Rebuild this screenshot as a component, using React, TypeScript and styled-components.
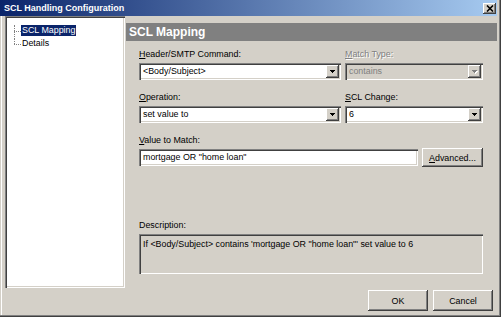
import React, { FC } from 'react';
import styled, { createGlobalStyle, css } from 'styled-components';

const colors = {
  face: '#D4D0C8',
  shadow: '#808080',
  dark: '#404040',
  light: '#FFFFFF',
  titleStart: '#0A246A',
  titleEnd: '#A6CAF0',
  selection: '#0A246A',
};

const sunken = css`
  box-shadow: inset 1px 1px ${colors.shadow}, inset 2px 2px ${colors.dark},
    inset -1px -1px ${colors.light}, inset -2px -2px ${colors.face};
`;

const raised = css`
  box-shadow: inset -1px -1px ${colors.dark}, inset 1px 1px ${colors.light},
    inset -2px -2px ${colors.shadow}, inset 2px 2px ${colors.face};
`;

const GlobalStyle = createGlobalStyle`
  html, body {
    margin: 0;
    padding: 0;
    background: #ffffff;
  }
  #root {
    width: 501px;
  }
`;

const Window = styled.div`
  width: 501px;
  height: 317px;
  box-sizing: border-box;
  display: flex;
  flex-direction: column;
  padding: 0 4px 2px 0;
  background: ${colors.face};
  box-shadow: inset -1px -1px ${colors.dark}, inset -2px -2px ${colors.shadow},
    inset 1px 0 ${colors.face}, inset 2px 0 ${colors.light};
  font-family: 'Liberation Sans', Arial, sans-serif;
  font-size: 8.9px;
  color: #000;
`;

const TitleBar = styled.div`
  height: 16px;
  flex: none;
  display: flex;
  align-items: center;
  justify-content: space-between;
  padding: 0 1px 0 4px;
  background: linear-gradient(to right, ${colors.titleStart}, ${colors.titleEnd});
`;

const TitleText = styled.span`
  color: #fff;
  font-weight: bold;
  font-size: 9px;
  line-height: 16px;
`;

const CloseButton = styled.span`
  width: 13px;
  height: 11px;
  display: flex;
  align-items: center;
  justify-content: center;
  background: ${colors.face};
  ${raised};
`;

const Main = styled.div`
  height: 272px;
  flex: none;
  display: flex;
  gap: 1px;
  padding-left: 5px;
`;

const TreePanel = styled.div`
  width: 120px;
  flex: none;
  box-sizing: border-box;
  padding-top: 8px;
  background: #fff;
  ${sunken};
`;

const TreeRow = styled.div`
  height: 13px;
  display: flex;
  align-items: stretch;
`;

const Connector = styled.span<{ $last?: boolean }>`
  position: relative;
  width: 7px;
  margin-left: 9px;
  flex: none;

  &::before {
    content: '';
    position: absolute;
    left: 0;
    top: 1px;
    bottom: ${(p) => (p.$last ? '50%' : '0')};
    border-left: 1px dotted ${colors.shadow};
  }

  &::after {
    content: '';
    position: absolute;
    left: 0;
    right: 0;
    top: 50%;
    border-top: 1px dotted ${colors.shadow};
  }
`;

const TreeLabel = styled.span<{ $selected?: boolean }>`
  align-self: center;
  padding: 0 1px;
  line-height: 11px;
  background: ${(p) => (p.$selected ? colors.selection : 'transparent')};
  color: ${(p) => (p.$selected ? '#fff' : '#000')};
`;

const Content = styled.div`
  flex: 1;
  display: flex;
  flex-direction: column;
`;

const Band = styled.div`
  margin-top: 7px;
  height: 18px;
  padding-left: 3px;
  background: ${colors.shadow};
  color: #fff;
  font-weight: bold;
  font-size: 12px;
  line-height: 18px;
`;

const Form = styled.div`
  width: 344px;
  padding: 7px 0 0 13px;
  display: flex;
  flex-direction: column;
`;

const FieldGrid = styled.div`
  display: grid;
  grid-template-columns: 202px 138px;
  column-gap: 4px;
  row-gap: 11px;
`;

const Field = styled.div<{ $gap?: number }>`
  display: flex;
  flex-direction: column;
  margin-top: ${(p) => p.$gap ?? 0}px;
`;

const Label = styled.span<{ $disabled?: boolean; $tight?: boolean }>`
  line-height: 12px;
  margin-bottom: ${(p) => (p.$tight ? 2 : 3)}px;
  color: ${(p) => (p.$disabled ? colors.shadow : '#000')};
  text-shadow: ${(p) => (p.$disabled ? `1px 1px ${colors.light}` : 'none')};
`;

const ComboBox = styled.div<{ $disabled?: boolean }>`
  height: 17px;
  box-sizing: border-box;
  display: flex;
  align-items: center;
  padding: 2px;
  background: ${(p) => (p.$disabled ? colors.face : '#fff')};
  color: ${(p) => (p.$disabled ? colors.shadow : '#000')};
  ${sunken};
`;

const ComboText = styled.span`
  flex: 1;
  padding-left: 2px;
  line-height: 13px;
  white-space: nowrap;
  overflow: hidden;
`;

const DropButton = styled.span`
  width: 13px;
  height: 13px;
  flex: none;
  display: flex;
  align-items: center;
  justify-content: center;
  background: ${colors.face};
  ${raised};
`;

const InputRow = styled.div`
  display: flex;
  align-items: center;
  gap: 4px;
  height: 19px;
`;

const TextBox = styled.div`
  flex: 1;
  height: 17px;
  box-sizing: border-box;
  padding: 2px 4px;
  line-height: 13px;
  background: #fff;
  white-space: nowrap;
  ${sunken};
`;

const Button = styled.button<{ $width: number; $height: number }>`
  width: ${(p) => p.$width}px;
  height: ${(p) => p.$height}px;
  flex: none;
  padding: 0;
  border: none;
  background: ${colors.face};
  font: inherit;
  color: #000;
  ${raised};
`;

const DescBox = styled.div`
  height: 40px;
  box-sizing: border-box;
  padding: 5px 4px;
  line-height: 11px;
  background: ${colors.face};
  ${sunken};
`;

const Footer = styled.div`
  height: 27px;
  flex: none;
  box-sizing: border-box;
  display: flex;
  justify-content: flex-end;
  align-items: flex-start;
  gap: 5px;
  padding: 2px 4px 0 0;
`;

const Arrow: FC<{ disabled?: boolean }> = ({ disabled }) => (
  <svg width="6" height="4" viewBox="0 0 6 4" shapeRendering="crispEdges">
    {disabled && (
      <g fill="#fff" transform="translate(1 1)">
        <rect x="0" y="0" width="5" height="1" />
        <rect x="1" y="1" width="3" height="1" />
        <rect x="2" y="2" width="1" height="1" />
      </g>
    )}
    <g fill={disabled ? colors.shadow : '#000'}>
      <rect x="0" y="0" width="5" height="1" />
      <rect x="1" y="1" width="3" height="1" />
      <rect x="2" y="2" width="1" height="1" />
    </g>
  </svg>
);

const CloseGlyph: FC = () => (
  <svg width="8" height="7" viewBox="0 0 8 7">
    <path d="M1 0.5 L7 6.5 M7 0.5 L1 6.5" stroke="#000" strokeWidth="1.6" />
  </svg>
);

const Combo: FC<{ value: string; disabled?: boolean }> = ({ value, disabled }) => (
  <ComboBox $disabled={disabled}>
    <ComboText>{value}</ComboText>
    <DropButton>
      <Arrow disabled={disabled} />
    </DropButton>
  </ComboBox>
);

const App: FC = () => (
  <>
    <GlobalStyle />
    <Window>
      <TitleBar>
        <TitleText>SCL Handling Configuration</TitleText>
        <CloseButton>
          <CloseGlyph />
        </CloseButton>
      </TitleBar>
      <Main>
        <TreePanel>
          <TreeRow>
            <Connector />
            <TreeLabel $selected>SCL Mapping</TreeLabel>
          </TreeRow>
          <TreeRow>
            <Connector $last />
            <TreeLabel>Details</TreeLabel>
          </TreeRow>
        </TreePanel>
        <Content>
          <Band>SCL Mapping</Band>
          <Form>
            <FieldGrid>
              <Field>
                <Label>
                  <u>H</u>eader/SMTP Command:
                </Label>
                <Combo value="<Body/Subject>" />
              </Field>
              <Field>
                <Label $disabled>
                  <u>M</u>atch Type:
                </Label>
                <Combo value="contains" disabled />
              </Field>
              <Field>
                <Label>
                  <u>O</u>peration:
                </Label>
                <Combo value="set value to" />
              </Field>
              <Field>
                <Label>
                  <u>S</u>CL Change:
                </Label>
                <Combo value="6" />
              </Field>
            </FieldGrid>
            <Field $gap={11}>
              <Label $tight>
                <u>V</u>alue to Match:
              </Label>
              <InputRow>
                <TextBox>mortgage OR "home loan"</TextBox>
                <Button $width={61} $height={19}>
                  <u>A</u>dvanced...
                </Button>
              </InputRow>
            </Field>
            <Field $gap={52}>
              <Label>Description:</Label>
              <DescBox>
                If &lt;Body/Subject&gt; contains 'mortgage OR "home loan"' set value to 6
              </DescBox>
            </Field>
          </Form>
        </Content>
      </Main>
      <Footer>
        <Button $width={60} $height={21}>OK</Button>
        <Button $width={60} $height={21}>Cancel</Button>
      </Footer>
    </Window>
  </>
);

export default App;
